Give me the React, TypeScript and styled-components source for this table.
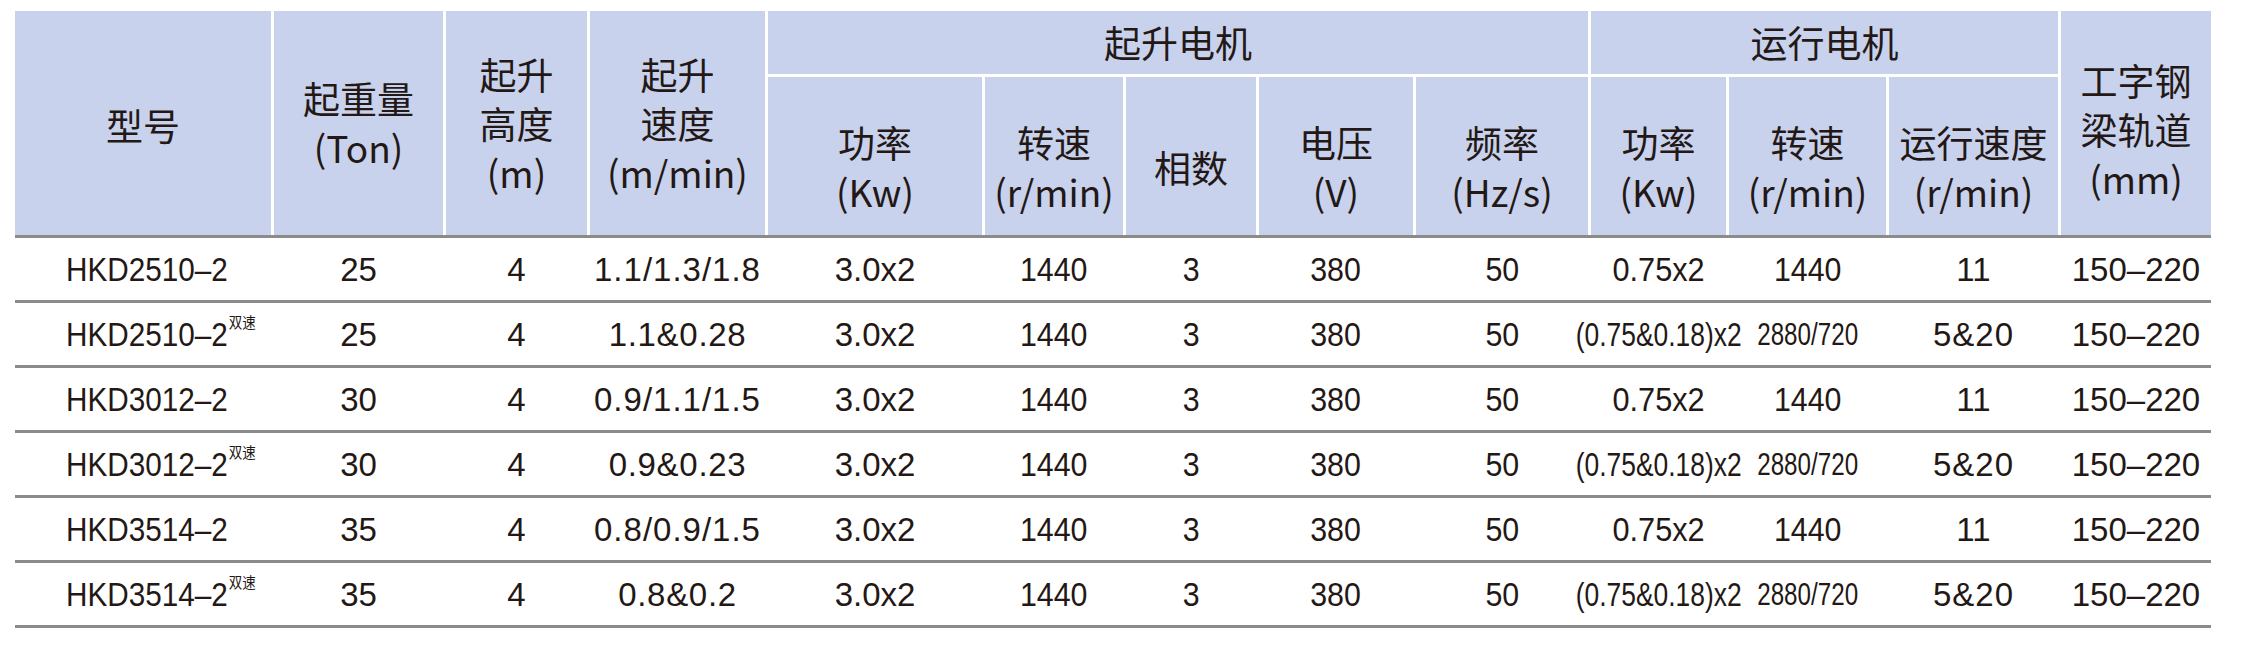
import React from "react";
import styled, { createGlobalStyle } from "styled-components";

const GlobalStyle = createGlobalStyle`
  html, body { margin: 0; padding: 0; background: #ffffff; }
  body { font-family: "Liberation Sans", Arial, sans-serif; color: #231815; }
`;

const COLS =
  "256px 169px 141px 175px 214px 138px 130px 154px 172px 135px 157px 169px 150px";

const Page = styled.div`
  width: 2251px;
  height: 656px;
  padding: 11px 0 0 15px;
  box-sizing: border-box;
  background: #ffffff;
`;

const Table = styled.div`
  width: 2196px;
  display: flex;
  flex-direction: column;
`;

const Head = styled.div`
  display: grid;
  grid-template-columns: ${COLS};
  grid-template-rows: 63px 158px;
  column-gap: 3px;
  row-gap: 3px;
  background: #ffffff;
  border-bottom: 3px solid #8b8b8b;
`;

const HeadCell = styled.div<{ $col: string; $row: string; $padTop?: number }>`
  grid-column: ${(p) => p.$col};
  grid-row: ${(p) => p.$row};
  background: #c8d2ec;
  display: flex;
  flex-direction: column;
  align-items: center;
  justify-content: center;
  padding-top: ${(p) => p.$padTop ?? 0}px;
  box-sizing: border-box;
  font-family: "Noto Sans CJK SC", "Liberation Sans", sans-serif;
  font-size: 37px;
  line-height: 49px;
  color: #231815;
  white-space: nowrap;
`;

const Line = styled.span`
  display: block;
`;

const Row = styled.div`
  display: grid;
  grid-template-columns: ${COLS};
  column-gap: 3px;
  height: 62px;
  border-bottom: 3px solid #8b8b8b;
`;

const Cell = styled.div<{ $left?: boolean }>`
  display: flex;
  align-items: center;
  justify-content: ${(p) => (p.$left ? "flex-start" : "center")};
  padding-left: ${(p) => (p.$left ? "51px" : "0")};
  padding-top: 1px;
  box-sizing: border-box;
  min-width: 0;
  white-space: nowrap;
`;

const Value = styled.span<{ $squeeze?: number; $size?: number; $track?: number; $origin?: string }>`
  display: inline-block;
  font-family: "Liberation Sans", Arial, sans-serif;
  font-size: ${(p) => p.$size ?? 33}px;
  letter-spacing: ${(p) => p.$track ?? 0}px;
  line-height: 1;
  color: #231815;
  transform: scaleX(${(p) => p.$squeeze ?? 1});
  transform-origin: ${(p) => p.$origin ?? "center"};
  white-space: nowrap;
`;

const Sup = styled.span`
  font-family: "Noto Sans CJK SC", sans-serif;
  font-size: 15px;
  letter-spacing: 0;
  position: relative;
  top: -18px;
  margin-left: 1px;
`;

type Spec = { text: string; squeeze?: number; size?: number; track?: number };

type RowData = {
  model: string;
  dual: boolean;
  cells: Spec[];
};

const single = (speed: Spec, load: string): Spec[] => [
  { text: load },
  { text: "4" },
  speed,
  { text: "3.0x2" },
  { text: "1440", squeeze: 0.92 },
  { text: "3", squeeze: 0.92 },
  { text: "380", squeeze: 0.92 },
  { text: "50", squeeze: 0.92 },
  { text: "0.75x2", squeeze: 0.93 },
  { text: "1440", squeeze: 0.92 },
  { text: "11" },
  { text: "150–220" },
];

const dual = (speed: Spec, load: string): Spec[] => [
  { text: load },
  { text: "4" },
  speed,
  { text: "3.0x2" },
  { text: "1440", squeeze: 0.92 },
  { text: "3", squeeze: 0.92 },
  { text: "380", squeeze: 0.92 },
  { text: "50", squeeze: 0.92 },
  { text: "(0.75&0.18)x2", squeeze: 0.8 },
  { text: "2880/720", size: 31, squeeze: 0.78 },
  { text: "5&20", track: 1 },
  { text: "150–220" },
];

const rows: RowData[] = [
  { model: "HKD2510–2", dual: false, cells: single({ text: "1.1/1.3/1.8", track: 1 }, "25") },
  { model: "HKD2510–2", dual: true, cells: dual({ text: "1.1&0.28", track: 0.7 }, "25") },
  { model: "HKD3012–2", dual: false, cells: single({ text: "0.9/1.1/1.5", track: 1 }, "30") },
  { model: "HKD3012–2", dual: true, cells: dual({ text: "0.9&0.23", track: 0.7 }, "30") },
  { model: "HKD3514–2", dual: false, cells: single({ text: "0.8/0.9/1.5", track: 1 }, "35") },
  { model: "HKD3514–2", dual: true, cells: dual({ text: "0.8&0.2", track: 0.7 }, "35") },
];

const subHeads: { col: number; lines: string[] }[] = [
  { col: 5, lines: ["功率", "(Kw)"] },
  { col: 6, lines: ["转速", "(r/min)"] },
  { col: 7, lines: ["相数"] },
  { col: 8, lines: ["电压", "(V)"] },
  { col: 9, lines: ["频率", "(Hz/s)"] },
  { col: 10, lines: ["功率", "(Kw)"] },
  { col: 11, lines: ["转速", "(r/min)"] },
  { col: 12, lines: ["运行速度", "(r/min)"] },
];

export default function App() {
  return (
    <>
      <GlobalStyle />
      <Page>
        <Table>
          <Head>
            <HeadCell $col="1" $row="1 / span 2" $padTop={4}>
              <Line>型号</Line>
            </HeadCell>
            <HeadCell $col="2" $row="1 / span 2" $padTop={0}>
              <Line>起重量</Line>
              <Line>(Ton)</Line>
            </HeadCell>
            <HeadCell $col="3" $row="1 / span 2" $padTop={0}>
              <Line>起升</Line>
              <Line>高度</Line>
              <Line>(m)</Line>
            </HeadCell>
            <HeadCell $col="4" $row="1 / span 2" $padTop={0}>
              <Line>起升</Line>
              <Line>速度</Line>
              <Line>(m/min)</Line>
            </HeadCell>
            <HeadCell $col="5 / span 5" $row="1">
              <Line>起升电机</Line>
            </HeadCell>
            <HeadCell $col="10 / span 3" $row="1">
              <Line>运行电机</Line>
            </HeadCell>
            <HeadCell $col="13" $row="1 / span 2" $padTop={12}>
              <Line>工字钢</Line>
              <Line>梁轨道</Line>
              <Line>(mm)</Line>
            </HeadCell>
            {subHeads.map((h) => (
              <HeadCell key={h.col} $col={String(h.col)} $row="2" $padTop={22}>
                {h.lines.map((l) => (
                  <Line key={l}>{l}</Line>
                ))}
              </HeadCell>
            ))}
          </Head>
          {rows.map((r, i) => (
            <Row key={i}>
              <Cell $left>
                <Value $squeeze={0.9} $origin="left">
                  {r.model}
                  {r.dual && <Sup>双速</Sup>}
                </Value>
              </Cell>
              {r.cells.map((c, j) => (
                <Cell key={j}>
                  <Value $squeeze={c.squeeze} $size={c.size} $track={c.track}>
                    {c.text}
                  </Value>
                </Cell>
              ))}
            </Row>
          ))}
        </Table>
      </Page>
    </>
  );
}
